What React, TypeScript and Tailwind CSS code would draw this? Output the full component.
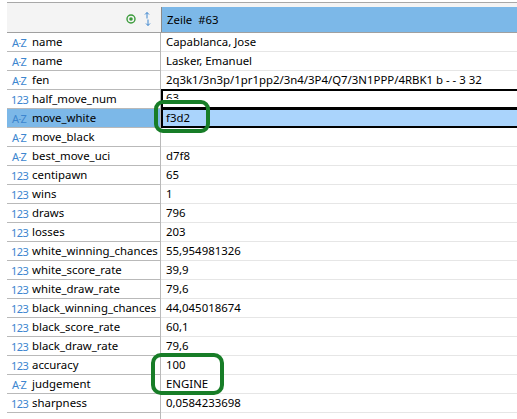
import React from "react";

type Row = { t: "az" | "num"; name: string; value: string };

const rows: Row[] = [
  { t: "az", name: "name", value: "Capablanca, Jose" },
  { t: "az", name: "name", value: "Lasker, Emanuel" },
  { t: "az", name: "fen", value: "2q3k1/3n3p/1pr1pp2/3n4/3P4/Q7/3N1PPP/4RBK1 b - - 3 32" },
  { t: "num", name: "half_move_num", value: "63" },
  { t: "az", name: "move_white", value: "f3d2" },
  { t: "az", name: "move_black", value: "" },
  { t: "az", name: "best_move_uci", value: "d7f8" },
  { t: "num", name: "centipawn", value: "65" },
  { t: "num", name: "wins", value: "1" },
  { t: "num", name: "draws", value: "796" },
  { t: "num", name: "losses", value: "203" },
  { t: "num", name: "white_winning_chances", value: "55,954981326" },
  { t: "num", name: "white_score_rate", value: "39,9" },
  { t: "num", name: "white_draw_rate", value: "79,6" },
  { t: "num", name: "black_winning_chances", value: "44,045018674" },
  { t: "num", name: "black_score_rate", value: "60,1" },
  { t: "num", name: "black_draw_rate", value: "79,6" },
  { t: "num", name: "accuracy", value: "100" },
  { t: "az", name: "judgement", value: "ENGINE" },
  { t: "num", name: "sharpness", value: "0,0584233698" },
];

function TypeIcon({ t }: { t: "az" | "num" }) {
  if (t === "az") {
    return (
      <span className="w-[20px] pl-[5px] text-[11px] leading-none text-[#3d86cf] tracking-[-0.5px] whitespace-nowrap">
        A<span className="text-[8px] relative top-[-1px]">-</span>Z
      </span>
    );
  }
  return (
    <span className="w-[20px] pl-[4px] text-[11px] leading-none text-[#3d86cf] tracking-[-0.6px]">
      123
    </span>
  );
}

export default function App() {
  return (
    <div
      className="relative w-[517px] h-[419px] overflow-hidden bg-white text-black"
      style={{ fontFamily: '"Noto Sans", "Open Sans", sans-serif' }}
    >
      <div className="ml-[7px] mt-[2px] h-[417px] flex flex-col border-t border-[#a8a8a8]">
        {/* header */}
        <div className="flex h-[30px] bg-[#f4f4f4] border-b border-[#a0a0a0]">
          <div className="w-[154px] flex items-center justify-end gap-[8px] pr-[10px] pt-[3px]">
            <svg width="10" height="10" viewBox="0 0 10 10">
              <circle cx="5" cy="5" r="4" fill="none" stroke="#3a9b3a" strokeWidth="1.4" />
              <circle cx="5" cy="5" r="1.8" fill="#3a9b3a" />
            </svg>
            <svg width="7" height="16" viewBox="0 0 7 16" fill="none" stroke="#3d86cf" strokeWidth="1">
              <path d="M3 1.5 V7.5" />
              <path d="M1 3.5 L3 1.5 L5 3.5" />
              <path d="M4 8.5 V14.5" />
              <path d="M2 12.5 L4 14.5 L6 12.5" />
            </svg>
          </div>
          <div className="flex-1 mt-[4px] bg-[#7cb8e8] border-l border-[#8a8a8a] flex items-center pl-[5px] text-[11.4px]">
            Zeile&nbsp;&nbsp;#63
          </div>
        </div>
        {/* rows */}
        {rows.map((r, i) => {
          const sel = i === 4;
          const edit = i === 3;
          return (
            <div key={i} className="flex h-[19px] shrink-0">
              <div
                className={
                  "w-[154px] flex items-center border-b border-r border-[#b9b9b9] text-[11.4px] " +
                  (sel ? "bg-[#7cb8e8]" : "bg-white")
                }
              >
                <TypeIcon t={r.t} />
                <span className="pl-[5px] whitespace-nowrap">{r.name}</span>
              </div>
              <div
                className={
                  "relative flex-1 flex items-center pl-[5px] text-[11.4px] whitespace-nowrap border-b " +
                  (sel ? "bg-[#aad4fc] border-[#e6e6e6]" : "bg-white border-[#e6e6e6]")
                }
              >
                {edit ? (
                  <div className="absolute left-0 right-[-2px] top-[-1px] h-[20px] border-2 border-black overflow-hidden bg-white">
                    <div className="pl-[3px] h-[8px] overflow-hidden">
                      <div className="text-[11.4px] leading-[16px] mt-[-1px]">{r.value}</div>
                    </div>
                  </div>
                ) : sel ? (
                  <div className="absolute left-0 right-[-2px] top-[-1px] h-[20px] border-2 border-black flex items-center pl-[3px]">
                    {r.value}
                  </div>
                ) : (
                  r.value
                )}
              </div>
            </div>
          );
        })}
        <div className="flex flex-1">
          <div className="w-[154px] border-r border-[#b9b9b9]" />
          <div className="flex-1" />
        </div>
      </div>

      {/* annotations */}
      <div className="absolute left-[154px] top-[100px] w-[56px] h-[33px] border-[4px] border-[#177d27] rounded-[9px]" />
      <div className="absolute left-[151px] top-[353px] w-[73px] h-[42px] border-[4px] border-[#177d27] rounded-[10px]" />
    </div>
  );
}
